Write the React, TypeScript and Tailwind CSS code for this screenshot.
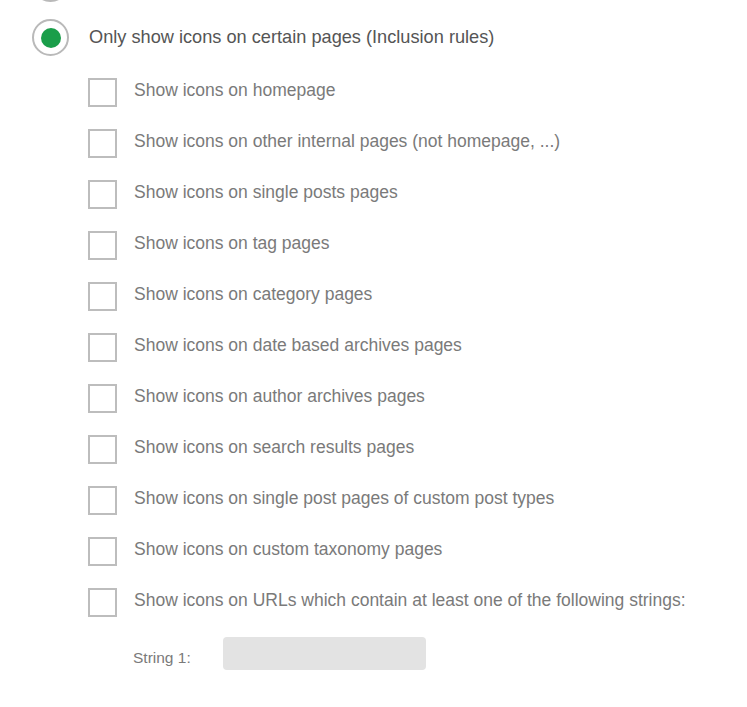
import React from "react";

const items = [
  "Show icons on homepage",
  "Show icons on other internal pages (not homepage, ...)",
  "Show icons on single posts pages",
  "Show icons on tag pages",
  "Show icons on category pages",
  "Show icons on date based archives pages",
  "Show icons on author archives pages",
  "Show icons on search results pages",
  "Show icons on single post pages of custom post types",
  "Show icons on custom taxonomy pages",
  "Show icons on URLs which contain at least one of the following strings:",
];

export default function App() {
  return (
    <div
      className="w-[747px] h-[707px] bg-white overflow-hidden"
      style={{ fontFamily: '"Liberation Sans", Arial, sans-serif' }}
    >
      <div className="h-[2px] overflow-hidden flex items-end pl-[32px]">
        <div className="w-[37px] h-[37px] shrink-0 rounded-full border-2 border-[#b9b9b9]" />
      </div>
      <div className="flex items-center mt-[17px] pl-[32px]">
        <div className="w-[37px] h-[37px] rounded-full border-2 border-[#b9b9b9] flex items-center justify-center">
          <div className="w-[20px] h-[20px] rounded-full bg-[#1a9e4a]" />
        </div>
        <span className="ml-[20px] text-[18.2px] text-[#555]">
          Only show icons on certain pages (Inclusion rules)
        </span>
      </div>
      <div className="pl-[88px] mt-[22px] flex flex-col gap-[22px]">
        {items.map((t) => (
          <label key={t} className="flex items-center h-[29px]">
            <span className="w-[29px] h-[29px] border-2 border-[#bdbdbd] bg-white shrink-0" />
            <span className="ml-[17px] mb-[4px] text-[17.5px] text-[#7a7a7a]">{t}</span>
          </label>
        ))}
      </div>
      <div className="flex items-start pl-[133px] mt-[20px]">
        <span className="w-[90px] pt-[9px] text-[15.5px] text-[#7a7a7a]">String 1:</span>
        <div className="w-[203px] h-[33px] rounded-[4px] bg-[#e3e3e3]" />
      </div>
    </div>
  );
}
